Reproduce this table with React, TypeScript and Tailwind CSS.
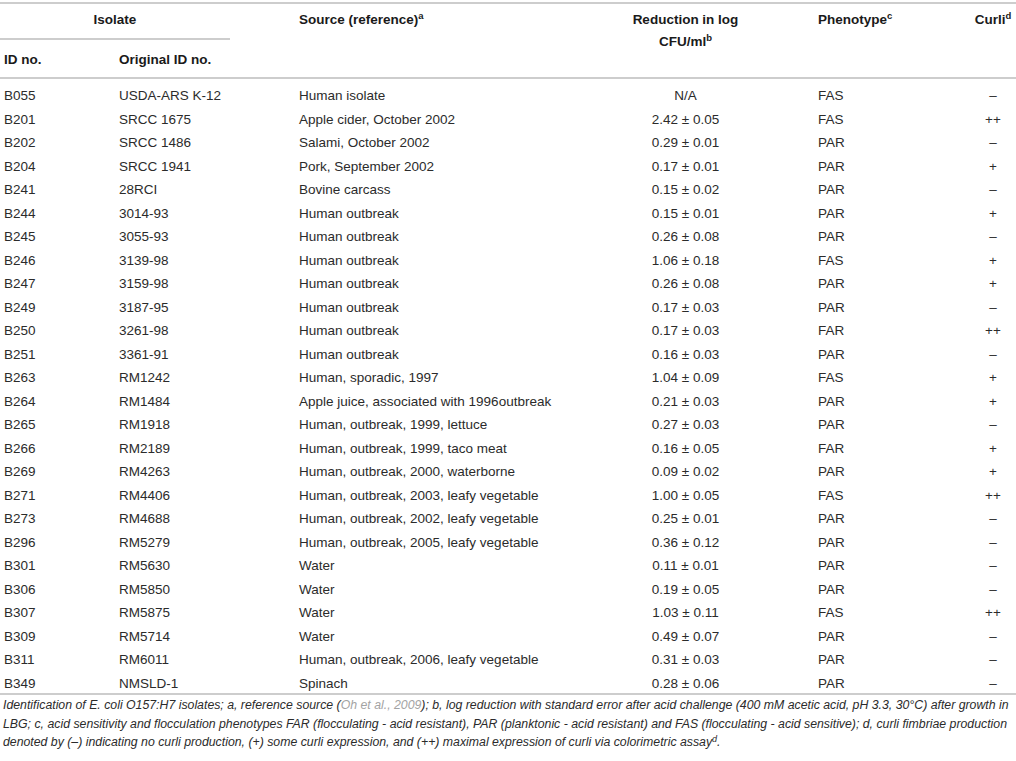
import React from "react";

type Row = [string, string, string, string, string, string];

const rows: Row[] = [
  ["B055", "USDA-ARS K-12", "Human isolate", "N/A", "FAS", "–"],
  ["B201", "SRCC 1675", "Apple cider, October 2002", "2.42 ± 0.05", "FAS", "++"],
  ["B202", "SRCC 1486", "Salami, October 2002", "0.29 ± 0.01", "PAR", "–"],
  ["B204", "SRCC 1941", "Pork, September 2002", "0.17 ± 0.01", "PAR", "+"],
  ["B241", "28RCI", "Bovine carcass", "0.15 ± 0.02", "PAR", "–"],
  ["B244", "3014-93", "Human outbreak", "0.15 ± 0.01", "PAR", "+"],
  ["B245", "3055-93", "Human outbreak", "0.26 ± 0.08", "PAR", "–"],
  ["B246", "3139-98", "Human outbreak", "1.06 ± 0.18", "FAS", "+"],
  ["B247", "3159-98", "Human outbreak", "0.26 ± 0.08", "PAR", "+"],
  ["B249", "3187-95", "Human outbreak", "0.17 ± 0.03", "PAR", "–"],
  ["B250", "3261-98", "Human outbreak", "0.17 ± 0.03", "FAR", "++"],
  ["B251", "3361-91", "Human outbreak", "0.16 ± 0.03", "PAR", "–"],
  ["B263", "RM1242", "Human, sporadic, 1997", "1.04 ± 0.09", "FAS", "+"],
  ["B264", "RM1484", "Apple juice, associated with 1996outbreak", "0.21 ± 0.03", "PAR", "+"],
  ["B265", "RM1918", "Human, outbreak, 1999, lettuce", "0.27 ± 0.03", "PAR", "–"],
  ["B266", "RM2189", "Human, outbreak, 1999, taco meat", "0.16 ± 0.05", "FAR", "+"],
  ["B269", "RM4263", "Human, outbreak, 2000, waterborne", "0.09 ± 0.02", "PAR", "+"],
  ["B271", "RM4406", "Human, outbreak, 2003, leafy vegetable", "1.00 ± 0.05", "FAS", "++"],
  ["B273", "RM4688", "Human, outbreak, 2002, leafy vegetable", "0.25 ± 0.01", "PAR", "–"],
  ["B296", "RM5279", "Human, outbreak, 2005, leafy vegetable", "0.36 ± 0.12", "PAR", "–"],
  ["B301", "RM5630", "Water", "0.11 ± 0.01", "PAR", "–"],
  ["B306", "RM5850", "Water", "0.19 ± 0.05", "PAR", "–"],
  ["B307", "RM5875", "Water", "1.03 ± 0.11", "FAS", "++"],
  ["B309", "RM5714", "Water", "0.49 ± 0.07", "PAR", "–"],
  ["B311", "RM6011", "Human, outbreak, 2006, leafy vegetable", "0.31 ± 0.03", "PAR", "–"],
  ["B349", "NMSLD-1", "Spinach", "0.28 ± 0.06", "PAR", "–"],
];

function Sup({ children }: { children: React.ReactNode }) {
  return <sup className="text-[9.5px] font-bold">{children}</sup>;
}

export default function App() {
  return (
    <div
      className="w-[1016px] h-[761px] bg-white pt-[2px] text-[#2b2b2b] overflow-hidden"
      style={{ fontFamily: '"Liberation Sans", Arial, Helvetica, sans-serif' }}
    >
      {/* Header */}
      <div className="flex border-y-2 border-[#cdcdcd] text-[13.5px] font-bold text-[#1a1a1a]">
        <div className="w-[292px] flex flex-col">
          <div className="h-[36px]">
            <div className="w-[230px] border-b-2 border-[#cdcdcd] h-[36px] pt-[5px] leading-[22px] text-center">
              Isolate
            </div>
          </div>
          <div className="h-[37px] flex pt-[9px] leading-[22px]">
            <div className="w-[113px] pl-[4px]">ID no.</div>
            <div className="pl-[6px]">Original ID no.</div>
          </div>
        </div>
        <div className="w-[268px] pl-[7px] pt-[5px] leading-[22px]">
          Source (reference)<Sup>a</Sup>
        </div>
        <div className="w-[251px] text-center pt-[5px] leading-[22px]">
          Reduction in log
          <br />
          CFU/ml<Sup>b</Sup>
        </div>
        <div className="w-[159px] pl-[7px] pt-[5px] leading-[22px]">
          Phenotype<Sup>c</Sup>
        </div>
        <div className="w-[46px] text-center pt-[5px] leading-[22px] whitespace-nowrap">
          Curli<Sup>d</Sup>
        </div>
      </div>

      {/* Body */}
      <div className="pt-[3px] border-b-2 border-[#cdcdcd] text-[13.5px]">
        {rows.map((r) => (
          <div key={r[0]} className="flex h-[23.5px] pt-[6px] leading-[16px] whitespace-nowrap">
            <div className="w-[113px] pl-[4px]">{r[0]}</div>
            <div className="w-[179px] pl-[6px]">{r[1]}</div>
            <div className="w-[268px] pl-[7px]">{r[2]}</div>
            <div className="w-[251px] text-center">{r[3]}</div>
            <div className="w-[159px] pl-[7px]">{r[4]}</div>
            <div className="w-[46px] text-center">{r[5]}</div>
          </div>
        ))}
      </div>

      {/* Footnote */}
      <div className="pt-[1px] pl-[3px] text-[12.3px] italic leading-[18.5px] whitespace-nowrap">
        Identification of E. coli O157:H7 isolates; a, reference source (
        <span className="text-[#a3a3a3]">Oh et al., 2009</span>); b, log reduction with standard error
        after acid challenge (400 mM acetic acid, pH 3.3, 30°C) after growth in
        <br />
        LBG; c, acid sensitivity and flocculation phenotypes FAR (flocculating - acid resistant), PAR
        (planktonic - acid resistant) and FAS (flocculating - acid sensitive); d, curli fimbriae production
        <br />
        denoted by (–) indicating no curli production, (+) some curli expression, and (++) maximal
        expression of curli via colorimetric assay<sup className="text-[9px]">d</sup>.
      </div>
    </div>
  );
}
